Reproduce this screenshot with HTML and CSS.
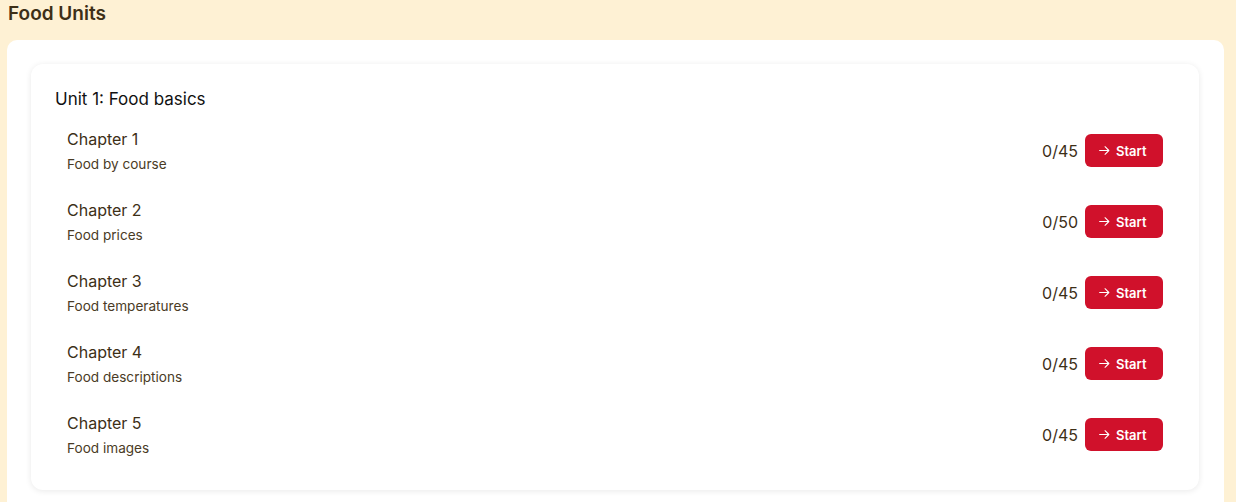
FILE: index.html
```html
<!DOCTYPE html>
<html lang="en">
<head>
    <meta charset="UTF-8">
    <meta name="viewport" content="width=device-width, initial-scale=1.0">
    <title>Food Units</title>
    <link rel="stylesheet" href="styles.css">
</head>
<body>

<h1 class="page-title">Food Units</h1>

<div class="panel">
    <div class="unit">
        <h2 class="unit-title">Unit 1: Food basics</h2>

        <div class="chapter">
            <div class="chapter-info">
                <div class="chapter-name">Chapter 1</div>
                <div class="chapter-desc">Food by course</div>
            </div>
            <div class="chapter-actions">
                <span class="count">0/45</span>
                <button class="start-btn">
                    <svg width="13" height="13" viewBox="0 0 24 24" fill="none" stroke="currentColor" stroke-width="2" stroke-linecap="round" stroke-linejoin="round"><path d="M3 12h17M13 5l7 7-7 7"/></svg>
                    Start
                </button>
            </div>
        </div>

        <div class="chapter">
            <div class="chapter-info">
                <div class="chapter-name">Chapter 2</div>
                <div class="chapter-desc">Food prices</div>
            </div>
            <div class="chapter-actions">
                <span class="count">0/50</span>
                <button class="start-btn">
                    <svg width="13" height="13" viewBox="0 0 24 24" fill="none" stroke="currentColor" stroke-width="2" stroke-linecap="round" stroke-linejoin="round"><path d="M3 12h17M13 5l7 7-7 7"/></svg>
                    Start
                </button>
            </div>
        </div>

        <div class="chapter">
            <div class="chapter-info">
                <div class="chapter-name">Chapter 3</div>
                <div class="chapter-desc">Food temperatures</div>
            </div>
            <div class="chapter-actions">
                <span class="count">0/45</span>
                <button class="start-btn">
                    <svg width="13" height="13" viewBox="0 0 24 24" fill="none" stroke="currentColor" stroke-width="2" stroke-linecap="round" stroke-linejoin="round"><path d="M3 12h17M13 5l7 7-7 7"/></svg>
                    Start
                </button>
            </div>
        </div>

        <div class="chapter">
            <div class="chapter-info">
                <div class="chapter-name">Chapter 4</div>
                <div class="chapter-desc">Food descriptions</div>
            </div>
            <div class="chapter-actions">
                <span class="count">0/45</span>
                <button class="start-btn">
                    <svg width="13" height="13" viewBox="0 0 24 24" fill="none" stroke="currentColor" stroke-width="2" stroke-linecap="round" stroke-linejoin="round"><path d="M3 12h17M13 5l7 7-7 7"/></svg>
                    Start
                </button>
            </div>
        </div>

        <div class="chapter">
            <div class="chapter-info">
                <div class="chapter-name">Chapter 5</div>
                <div class="chapter-desc">Food images</div>
            </div>
            <div class="chapter-actions">
                <span class="count">0/45</span>
                <button class="start-btn">
                    <svg width="13" height="13" viewBox="0 0 24 24" fill="none" stroke="currentColor" stroke-width="2" stroke-linecap="round" stroke-linejoin="round"><path d="M3 12h17M13 5l7 7-7 7"/></svg>
                    Start
                </button>
            </div>
        </div>
    </div>
</div>

</body>
</html>
```

FILE: styles.css
```css
body {
    margin: 0;
    background-color: #fef1d4;
    color: #3d2f17;
    font-family: Inter, "Noto Sans", sans-serif;
}

.page-title {
    margin: 0;
    padding: 2px 8px 0;
    height: 38px;
    font-size: 19px;
    line-height: 24px;
    font-weight: 600;
    color: #3d2f17;
}

.panel {
    margin-left: 7px;
    width: 1217px;
    background-color: #fff;
    border-radius: 10px;
    padding: 24px 25px 24px 24px;
    box-sizing: border-box;
}

.unit {
    background-color: #fff;
    border-radius: 12px;
    box-shadow: 0 1px 6px rgba(0, 0, 0, 0.09);
    padding: 21px 24px 20px 24px;
}

.unit-title {
    margin: 0 0 2px;
    font-size: 17px;
    line-height: 28px;
    font-weight: 400;
    color: #111;
}

.chapter {
    display: flex;
    justify-content: space-between;
    align-items: center;
    padding: 12px;
}

.chapter-name {
    font-size: 16px;
    line-height: 24px;
    font-weight: 400;
}

.chapter-desc {
    margin-top: 3px;
    font-size: 13.6px;
    line-height: 20px;
    color: #4a3b25;
}

.chapter-actions {
    display: flex;
    align-items: center;
    gap: 7px;
}

.count {
    font-size: 16px;
}

.start-btn {
    display: flex;
    align-items: center;
    gap: 5px;
    height: 33px;
    width: 78px;
    padding: 0 0 0 13px;
    border: none;
    border-radius: 6px;
    background-color: #d0112b;
    color: #fff;
    font-family: Inter, "Noto Sans", sans-serif;
    font-size: 13px;
    font-weight: 600;
    cursor: pointer;
}
```
